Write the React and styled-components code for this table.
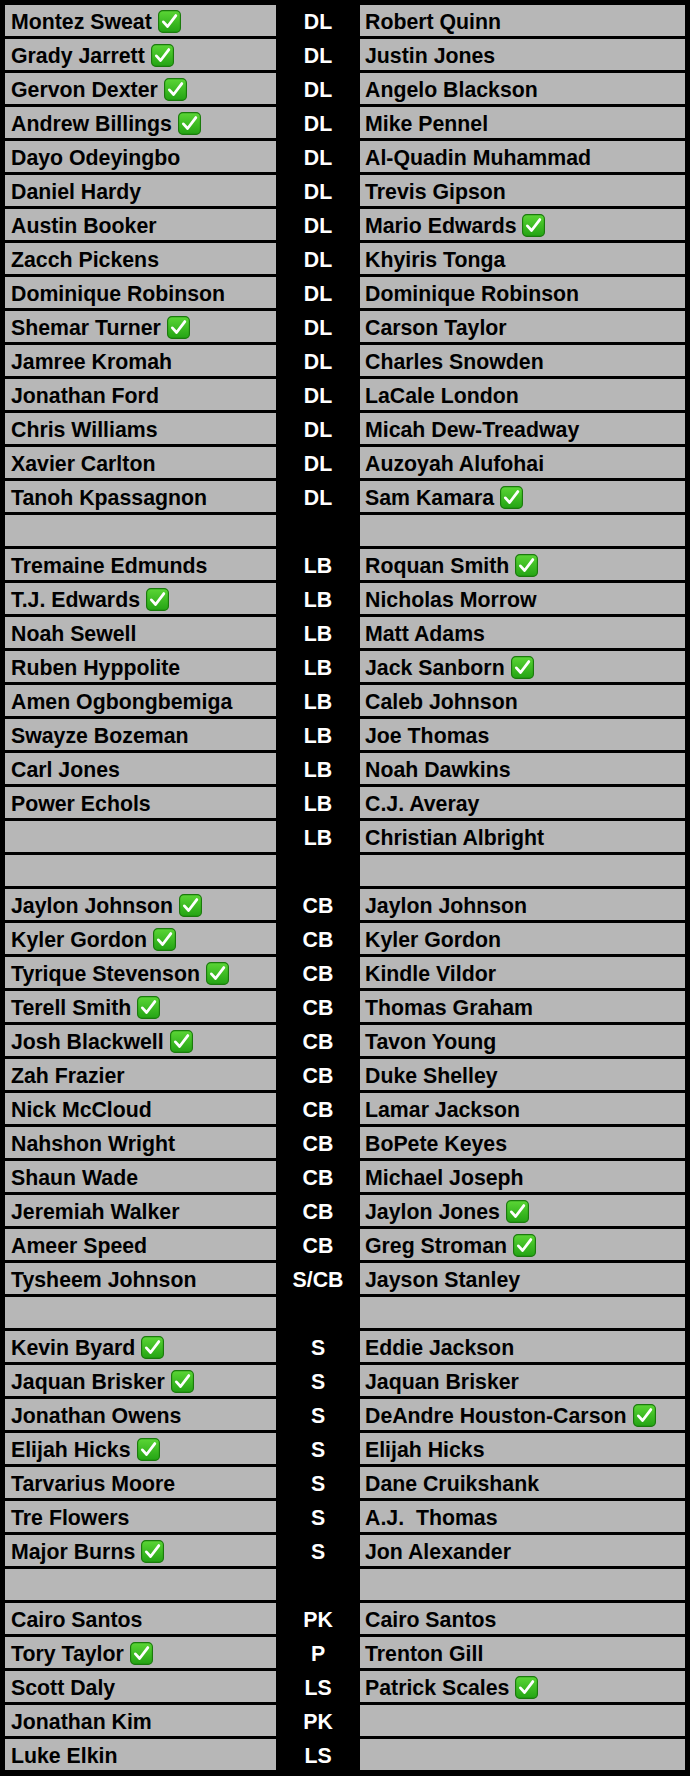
import React from "react";
import styled, { createGlobalStyle } from "styled-components";

const GlobalStyle = createGlobalStyle`
  body {
    margin: 0;
    background: #ffffff;
    font-family: "Liberation Sans", Arial, Helvetica, sans-serif;
  }
`;

const Sheet = styled.div`
  width: 680px;
  background: #000000;
  padding: 5px 5px 6px 5px;
  display: flex;
  flex-direction: column;
  gap: 3px;
`;

const Row = styled.div`
  display: grid;
  grid-template-columns: 271px 84px 325px;
  height: 31px;
`;

const NameCell = styled.div`
  background: #b7b7b7;
  color: #000000;
  font-size: 21.3px;
  font-weight: 700;
  line-height: 24px;
  padding: 5px 0 0 ${(p) => (p.$side === "left" ? "6px" : "5px")};
  white-space: pre;
  display: flex;
  align-items: flex-start;
  overflow: hidden;
`;

const PosCell = styled.div`
  color: #ffffff;
  font-size: 21.3px;
  font-weight: 700;
  line-height: 24px;
  padding-top: 5px;
  text-align: center;
`;

const Check = styled.svg`
  width: 23px;
  height: 23px;
  margin-left: 6px;
  margin-top: 0;
  flex: none;
`;

function CheckMark() {
  return (
    <Check viewBox="0 0 24 24">
      <defs>
        <linearGradient id="ck" x1="0" y1="0" x2="0" y2="1">
          <stop offset="0" stopColor="#5bd636" />
          <stop offset="1" stopColor="#23a313" />
        </linearGradient>
      </defs>
      <rect x="0.6" y="0.6" width="22.8" height="22.8" rx="4.5" fill="url(#ck)" stroke="#1a7a0c" strokeWidth="1.2" />
      <path d="M5.6 12.4 L10 17.2 L18.6 5.8" fill="none" stroke="#ffffff" strokeWidth="2.9" strokeLinecap="round" strokeLinejoin="round" />
    </Check>
  );
}

// [left, pos, right, leftChecked, rightChecked]
const rows = [
  ["Montez Sweat", "DL", "Robert Quinn", 1, 0],
  ["Grady Jarrett", "DL", "Justin Jones", 1, 0],
  ["Gervon Dexter", "DL", "Angelo Blackson", 1, 0],
  ["Andrew Billings", "DL", "Mike Pennel", 1, 0],
  ["Dayo Odeyingbo", "DL", "Al-Quadin Muhammad", 0, 0],
  ["Daniel Hardy", "DL", "Trevis Gipson", 0, 0],
  ["Austin Booker", "DL", "Mario Edwards", 0, 1],
  ["Zacch Pickens", "DL", "Khyiris Tonga", 0, 0],
  ["Dominique Robinson", "DL", "Dominique Robinson", 0, 0],
  ["Shemar Turner", "DL", "Carson Taylor", 1, 0],
  ["Jamree Kromah", "DL", "Charles Snowden", 0, 0],
  ["Jonathan Ford", "DL", "LaCale London", 0, 0],
  ["Chris Williams", "DL", "Micah Dew-Treadway", 0, 0],
  ["Xavier Carlton", "DL", "Auzoyah Alufohai", 0, 0],
  ["Tanoh Kpassagnon", "DL", "Sam Kamara", 0, 1],
  ["", "", "", 0, 0],
  ["Tremaine Edmunds", "LB", "Roquan Smith", 0, 1],
  ["T.J. Edwards", "LB", "Nicholas Morrow", 1, 0],
  ["Noah Sewell", "LB", "Matt Adams", 0, 0],
  ["Ruben Hyppolite", "LB", "Jack Sanborn", 0, 1],
  ["Amen Ogbongbemiga", "LB", "Caleb Johnson", 0, 0],
  ["Swayze Bozeman", "LB", "Joe Thomas", 0, 0],
  ["Carl Jones", "LB", "Noah Dawkins", 0, 0],
  ["Power Echols", "LB", "C.J. Averay", 0, 0],
  ["", "LB", "Christian Albright", 0, 0],
  ["", "", "", 0, 0],
  ["Jaylon Johnson", "CB", "Jaylon Johnson", 1, 0],
  ["Kyler Gordon", "CB", "Kyler Gordon", 1, 0],
  ["Tyrique Stevenson", "CB", "Kindle Vildor", 1, 0],
  ["Terell Smith", "CB", "Thomas Graham", 1, 0],
  ["Josh Blackwell", "CB", "Tavon Young", 1, 0],
  ["Zah Frazier", "CB", "Duke Shelley", 0, 0],
  ["Nick McCloud", "CB", "Lamar Jackson", 0, 0],
  ["Nahshon Wright", "CB", "BoPete Keyes", 0, 0],
  ["Shaun Wade", "CB", "Michael Joseph", 0, 0],
  ["Jeremiah Walker", "CB", "Jaylon Jones", 0, 1],
  ["Ameer Speed", "CB", "Greg Stroman", 0, 1],
  ["Tysheem Johnson", "S/CB", "Jayson Stanley", 0, 0],
  ["", "", "", 0, 0],
  ["Kevin Byard", "S", "Eddie Jackson", 1, 0],
  ["Jaquan Brisker", "S", "Jaquan Brisker", 1, 0],
  ["Jonathan Owens", "S", "DeAndre Houston-Carson", 0, 1],
  ["Elijah Hicks", "S", "Elijah Hicks", 1, 0],
  ["Tarvarius Moore", "S", "Dane Cruikshank", 0, 0],
  ["Tre Flowers", "S", "A.J.  Thomas", 0, 0],
  ["Major Burns", "S", "Jon Alexander", 1, 0],
  ["", "", "", 0, 0],
  ["Cairo Santos", "PK", "Cairo Santos", 0, 0],
  ["Tory Taylor", "P", "Trenton Gill", 1, 0],
  ["Scott Daly", "LS", "Patrick Scales", 0, 1],
  ["Jonathan Kim", "PK", "", 0, 0],
  ["Luke Elkin", "LS", "", 0, 0],
];

export default function App() {
  return (
    <>
      <GlobalStyle />
      <Sheet>
        {rows.map(([left, pos, right, lc, rc], i) => (
          <Row key={i}>
            <NameCell $side="left">
              {left}
              {lc ? <CheckMark /> : null}
            </NameCell>
            <PosCell>{pos}</PosCell>
            <NameCell $side="right">
              {right}
              {rc ? <CheckMark /> : null}
            </NameCell>
          </Row>
        ))}
      </Sheet>
    </>
  );
}
